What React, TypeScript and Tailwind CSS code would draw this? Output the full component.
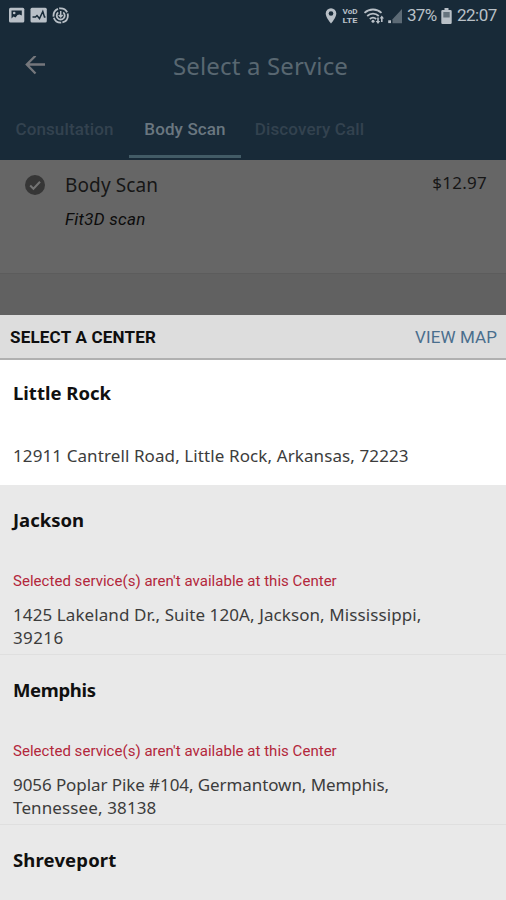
import type { ReactNode } from 'react'

interface Center {
  name: string
  address: string[]
  available: boolean
  // letter spacing per name / address line
  nameClass: string
  lineClass: string[]
}

const centers: Center[] = [
  {
    name: 'Little Rock',
    address: ['12911 Cantrell Road, Little Rock, Arkansas, 72223'],
    available: true,
    nameClass: 'tracking-[0px]',
    lineClass: ['tracking-[0.1px]'],
  },
  {
    name: 'Jackson',
    address: ['1425 Lakeland Dr., Suite 120A, Jackson, Mississippi,', '39216'],
    available: false,
    nameClass: 'tracking-[0px]',
    lineClass: ['tracking-[0.09px]', 'tracking-[0.4px]'],
  },
  {
    name: 'Memphis',
    address: ['9056 Poplar Pike #104, Germantown, Memphis,', 'Tennessee, 38138'],
    available: false,
    nameClass: 'tracking-[-0.35px]',
    lineClass: ['tracking-[-0.08px]', 'tracking-[0.12px]'],
  },
  {
    name: 'Shreveport',
    address: [],
    available: false,
    nameClass: 'tracking-[0.15px]',
    lineClass: [],
  },
]

function StatusBar() {
  return (
    <div className="flex h-8 shrink-0 items-center text-[#b9c0c7]">
      <svg className="ml-[9px]" width="62" height="18" viewBox="0 0 62 18">
        <rect x="0" y="0.800" width="15.300" height="14.700" rx="1.500" fill="currentColor" />
        <path d="M2.500 3.500h10.300v5l-2.300-1-2 .5-2 2.500-2-1-2 2z" fill="#182a38" />
        <circle cx="5.200" cy="6" r="1.300" fill="currentColor" />
        <rect x="21.500" y="0.800" width="16.300" height="14.700" rx="1.500" fill="currentColor" />
        <path d="M23.500 10h3l1.500-1.500 2.500 3 3.300-7 1.700 5.500h1" fill="none" stroke="#182a38" strokeWidth="1.500" />
        <circle cx="51.700" cy="8.500" r="7.200" fill="none" stroke="currentColor" strokeWidth="1.800" strokeDasharray="9.500 1.200" />
        <path d="M49.200 5.400a4 4 0 1 0 5 0" fill="none" stroke="currentColor" strokeWidth="1.800" />
        <path d="M51.700 4v5.500M49.700 8l2 2 2-2" fill="none" stroke="currentColor" strokeWidth="1.500" />
      </svg>
      <div className="flex-1" />
      <svg width="78" height="20" viewBox="0 0 78 20">
        <path d="M6 2.200a5.300 5.300 0 0 0-5.300 5.300C.7 11.500 6 17.500 6 17.500s5.300-6 5.300-10A5.300 5.300 0 0 0 6 2.200z" fill="currentColor" />
        <circle cx="6" cy="7.500" r="2.300" fill="#182a38" />
        <g fill="currentColor" fontFamily="Roboto, sans-serif" fontSize="7.500" fontWeight="700">
          <text x="17.500" y="8" textLength="15" lengthAdjust="spacingAndGlyphs">VoD</text>
          <text x="17.500" y="17" textLength="15" lengthAdjust="spacingAndGlyphs">LTE</text>
        </g>
        <g fill="none" stroke="currentColor" strokeWidth="1.800">
          <path d="M39.500 6.800c4.800-4.400 12.200-4.400 17 0" />
          <path d="M42.200 10c3.400-3.100 8.200-3.100 11.600 0" />
          <path d="M44.800 13c1.900-1.700 4.500-1.700 6.400 0" />
        </g>
        <circle cx="48" cy="15.300" r="1.500" fill="currentColor" />
        <path d="M53 18l-2.300-3h1.500v-3.500h1.600V15h1.500zM56.800 9.500l2.200 3h-1.400V16H56v-3.500h-1.400z" fill="currentColor" />
        <rect x="63.200" y="14.300" width="2.800" height="2.800" fill="currentColor" />
        <path d="M77 3v14.200h-9.500v-4z" fill="#5c6a75" />
      </svg>
      <span className="ml-[4px] w-[31px] text-[17px] tracking-[-0.7px]">37%</span>
      <svg className="ml-[3px]" width="11" height="17" viewBox="0 0 11 17">
        <path d="M3.500 0h4v2h2a1.200 1.200 0 0 1 1.200 1.200v11.600a1.200 1.200 0 0 1-1.200 1.200h-8A1.200 1.200 0 0 1 .3 14.800V3.200A1.200 1.200 0 0 1 1.500 2h2z" fill="currentColor" />
        <rect x="2.300" y="4" width="6.400" height="5.500" fill="#66737d" />
      </svg>
      <span className="mr-[9px] ml-[5px] w-10 text-[17px] tracking-[-0.5px]">22:07</span>
    </div>
  )
}

function Tab({ className, active, children }: { className: string; active?: boolean; children: ReactNode }) {
  return (
    <div
      className={`flex h-full flex-col items-center justify-between text-[17px] font-medium tracking-[0.12px] whitespace-nowrap ${
        active ? 'text-[#6a7780]' : 'text-[#33424f]'
      } ${className}`}
    >
      <span className="pt-[18px] leading-[22px]">{children}</span>
      {active && <div className="mb-0.5 h-[3px] w-full bg-[#425b66]" />}
    </div>
  )
}

function CenterRow({ center }: { center: Center }) {
  return (
    <li
      className={`shrink-0 px-[13px] ${
        center.available ? 'h-[125px] bg-white pt-[21px]' : 'h-[170px] border-b border-[#dfdfdf] bg-[#e9e9e9] pt-[23px]'
      }`}
    >
      <h3 className={`font-['Noto_Sans'] text-[18.5px] leading-6 font-bold text-[#101010] ${center.nameClass}`}>
        {center.name}
      </h3>
      {!center.available && center.address.length > 0 && (
        <p className="mt-[39px] text-[15px] leading-5 tracking-[0.03px] whitespace-nowrap text-[#b3273b]">
          Selected service(s) aren't available at this Center
        </p>
      )}
      <div className={center.available ? 'mt-[39px]' : 'mt-3'}>
        {center.address.map((line, i) => (
          <p
            key={line}
            className={`font-['Noto_Sans'] text-[17px] leading-[23px] whitespace-nowrap text-[#3c3c3c] ${center.lineClass[i]}`}
          >
            {line}
          </p>
        ))}
      </div>
    </li>
  )
}

export default function App() {
  return (
    <div className="flex h-[900px] w-[506px] flex-col overflow-hidden bg-[#616161] font-['Roboto',sans-serif]">
      <header className="flex h-40 shrink-0 flex-col bg-[#182a38]">
        <StatusBar />
        <div className="flex h-[68px] shrink-0 items-center">
          <svg className="ml-[25px]" width="20" height="20" viewBox="0 0 20 20" fill="none" stroke="#75777c" strokeWidth="2.300">
            <path d="M20 8.500H2M10.500 -0.200L1.800 8.500l8.700 9" />
          </svg>
          <h1 className="ml-32 font-['Noto_Sans'] text-[24px] tracking-[0.15px] whitespace-nowrap text-[#586771]">
            Select a Service
          </h1>
        </div>
        <nav className="flex flex-1">
          <Tab className="w-[129px]">Consultation</Tab>
          <Tab className="w-28" active>Body Scan</Tab>
          <Tab className="w-[137px]">Discovery Call</Tab>
        </nav>
      </header>

      {/* service behind the dimmed backdrop */}
      <section className="flex h-[114px] shrink-0 items-start border-b border-[#5c5c5c] bg-[#666]">
        <svg className="mt-[15px] ml-[25px]" width="20" height="20" viewBox="0 0 20 20">
          <circle cx="10" cy="10" r="10" fill="#363636" />
          <path d="M5.200 10.500l3.200 3.200 6.600-7" fill="none" stroke="#747474" strokeWidth="2" />
        </svg>
        <div className="ml-5 flex-1">
          <h2 className="mt-3 font-['Noto_Sans'] text-[19px] leading-[26px] tracking-[0.12px] text-[#161616]">Body Scan</h2>
          <p className="mt-[10px] text-[17px] leading-[22px] tracking-[0.25px] text-[#0c0c0c] italic">Fit3D scan</p>
        </div>
        <span className="mt-3 mr-[19px] font-['Noto_Sans'] text-[17px] leading-[22px] tracking-[0.25px] text-[#161616]">$12.97</span>
      </section>
      <div className="h-[41px] shrink-0" />

      <section className="flex min-h-0 flex-1 flex-col bg-[#e9e9e9]">
        <div className="flex h-[45px] shrink-0 items-center justify-between border-b-2 border-[#b0b0b0] bg-[#ddd] pt-0.5 pr-[9px] pl-2.5">
          <span className="text-[17px] font-bold tracking-[0.2px] text-[#0e0e0e]">SELECT A CENTER</span>
          <span className="text-[17px] tracking-[0.1px] text-[#4a6e8d]">VIEW MAP</span>
        </div>
        <ul className="flex flex-col">
          {centers.map(c => <CenterRow key={c.name} center={c} />)}
        </ul>
      </section>
    </div>
  )
}
